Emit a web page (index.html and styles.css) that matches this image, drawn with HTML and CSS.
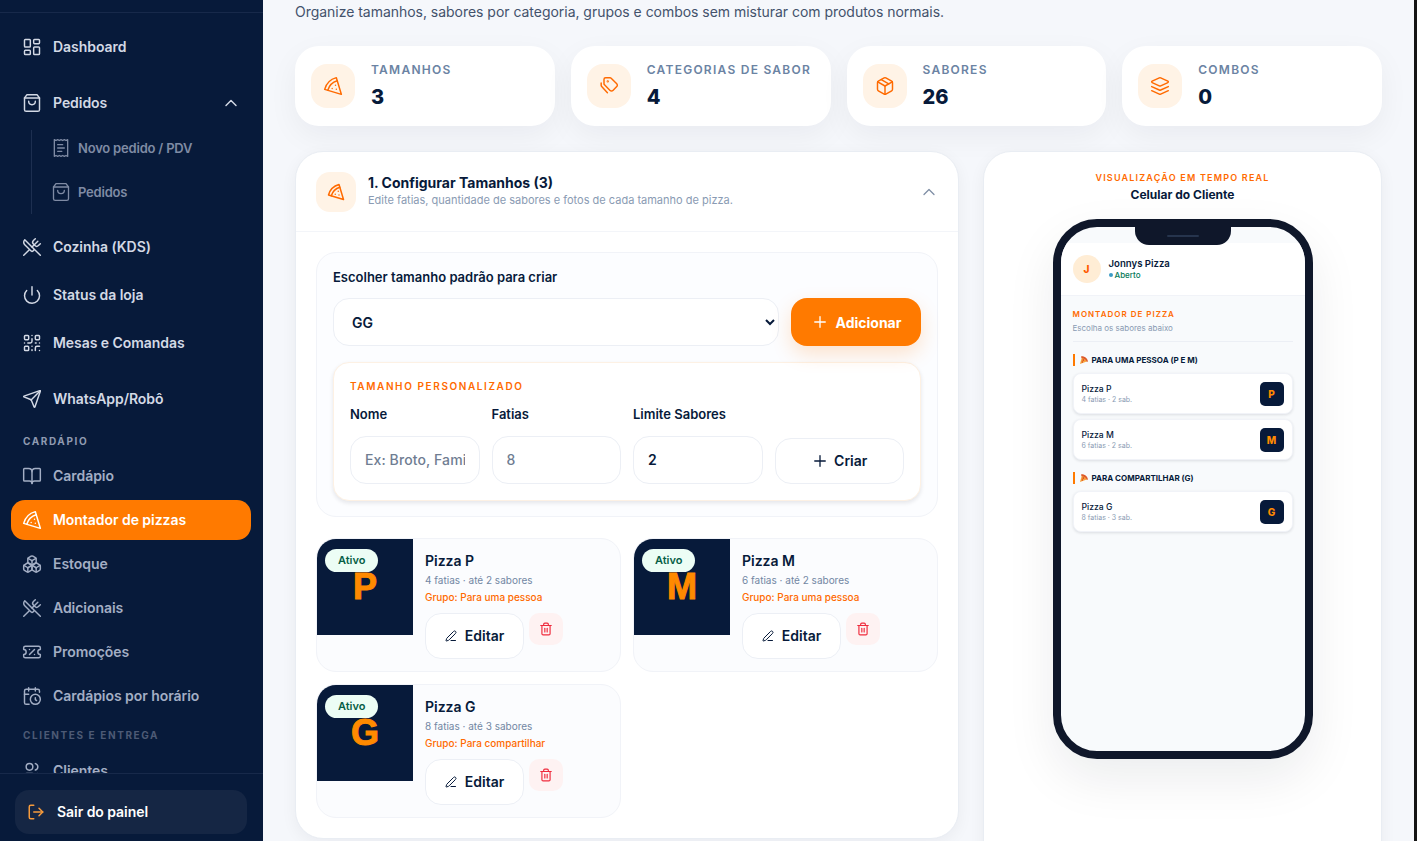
FILE: index.html
```html
<!DOCTYPE html>
<html lang="pt-BR">
<head>
    <meta charset="UTF-8">
    <title>Montador de pizzas</title>
    <link rel="stylesheet" href="styles.css">
</head>
<body>
    <svg class="sprite" xmlns="http://www.w3.org/2000/svg">
        <symbol id="i-dash" viewBox="0 0 24 24"><rect width="7" height="9" x="3" y="3" rx="1"/><rect width="7" height="5" x="14" y="3" rx="1"/><rect width="7" height="9" x="14" y="12" rx="1"/><rect width="7" height="5" x="3" y="16" rx="1"/></symbol>
        <symbol id="i-bag" viewBox="0 0 24 24"><path d="M6 2 3 6v14a2 2 0 0 0 2 2h14a2 2 0 0 0 2-2V6l-3-4Z"/><path d="M3 6h18"/><path d="M16 10a4 4 0 0 1-8 0"/></symbol>
        <symbol id="i-receipt" viewBox="0 0 24 24"><path d="M4 2v20l2-1 2 1 2-1 2 1 2-1 2 1 2-1 2 1V2l-2 1-2-1-2 1-2-1-2 1-2-1-2 1Z"/><path d="M14 8H8"/><path d="M16 12H8"/><path d="M13 16H8"/></symbol>
        <symbol id="i-utensils" viewBox="0 0 24 24"><path d="m16 2-2.3 2.3a3 3 0 0 0 0 4.2l1.8 1.8a3 3 0 0 0 4.2 0L22 8"/><path d="M15 15 3.3 3.3a4.2 4.2 0 0 0 0 6l7.3 7.3c.7.7 2 .7 2.8 0L15 15Zm0 0 7 7"/><path d="m2.1 21.8 6.4-6.3"/><path d="m19 5-7 7"/></symbol>
        <symbol id="i-power" viewBox="0 0 24 24"><path d="M12 2v10"/><path d="M18.4 6.6a9 9 0 1 1-12.77.04"/></symbol>
        <symbol id="i-qr" viewBox="0 0 24 24"><rect width="5" height="5" x="3" y="3" rx="1"/><rect width="5" height="5" x="16" y="3" rx="1"/><rect width="5" height="5" x="3" y="16" rx="1"/><path d="M21 16h-3a2 2 0 0 0-2 2v3"/><path d="M21 21v.01"/><path d="M12 7v3a2 2 0 0 1-2 2H7"/><path d="M3 12h.01"/><path d="M12 3h.01"/><path d="M12 16v.01"/><path d="M16 12h1"/><path d="M21 12v.01"/><path d="M12 21v-1"/></symbol>
        <symbol id="i-send" viewBox="0 0 24 24"><path d="M14.536 21.686a.5.5 0 0 0 .937-.024l6.5-19a.496.496 0 0 0-.635-.635l-19 6.5a.5.5 0 0 0-.024.937l7.93 3.18a2 2 0 0 1 1.112 1.11z"/><path d="m21.854 2.147-10.94 10.939"/></symbol>
        <symbol id="i-book" viewBox="0 0 24 24"><path d="M12 7v14"/><path d="M3 18a1 1 0 0 1-1-1V4a1 1 0 0 1 1-1h5a4 4 0 0 1 4 4 4 4 0 0 1 4-4h5a1 1 0 0 1 1 1v13a1 1 0 0 1-1 1h-6a3 3 0 0 0-3 3 3 3 0 0 0-3-3z"/></symbol>
        <symbol id="i-pizza" viewBox="0 0 24 24"><path d="M15 11h.01"/><path d="M11 15h.01"/><path d="M16 16h.01"/><path d="m2 16 20 6-6-20A20 20 0 0 0 2 16"/><path d="M5.71 17.11a17.04 17.04 0 0 1 11.4-11.4"/></symbol>
        <symbol id="i-boxes" viewBox="0 0 24 24"><path d="M2.97 12.92A2 2 0 0 0 2 14.63v3.24a2 2 0 0 0 .97 1.71l3 1.8a2 2 0 0 0 2.06 0L12 19v-5.5l-5-3-4.03 2.42Z"/><path d="m7 16.5-4.74-2.85"/><path d="m7 16.5 5-3"/><path d="M7 16.5v5.17"/><path d="M12 13.5V19l3.97 2.38a2 2 0 0 0 2.06 0l3-1.8a2 2 0 0 0 .97-1.71v-3.24a2 2 0 0 0-.97-1.71L17 10.5l-5 3Z"/><path d="m17 16.5-5-3"/><path d="m17 16.5 4.74-2.85"/><path d="M17 16.5v5.17"/><path d="M7.97 4.42A2 2 0 0 0 7 6.13v4.37l5 3 5-3V6.13a2 2 0 0 0-.97-1.71l-3-1.8a2 2 0 0 0-2.06 0l-3 1.8Z"/><path d="M12 8 7.26 5.15"/><path d="m12 8 4.74-2.85"/><path d="M12 13.5V8"/></symbol>
        <symbol id="i-ticket" viewBox="0 0 24 24"><path d="M2 9a3 3 0 1 1 0 6v2a2 2 0 0 0 2 2h16a2 2 0 0 0 2-2v-2a3 3 0 1 1 0-6V7a2 2 0 0 0-2-2H4a2 2 0 0 0-2 2Z"/><path d="M9 9h.01"/><path d="m15 9-6 6"/><path d="M15 15h.01"/></symbol>
        <symbol id="i-calendar" viewBox="0 0 24 24"><path d="M21 7.5V6a2 2 0 0 0-2-2H5a2 2 0 0 0-2 2v14a2 2 0 0 0 2 2h3.5"/><path d="M16 2v4"/><path d="M8 2v4"/><path d="M3 10h5"/><path d="M17.5 17.5 16 16.3V14"/><circle cx="16" cy="16" r="6"/></symbol>
        <symbol id="i-users" viewBox="0 0 24 24"><path d="M16 21v-2a4 4 0 0 0-4-4H6a4 4 0 0 0-4 4v2"/><circle cx="9" cy="7" r="4"/><path d="M22 21v-2a4 4 0 0 0-3-3.87"/><path d="M16 3.13a4 4 0 0 1 0 7.75"/></symbol>
        <symbol id="i-logout" viewBox="0 0 24 24"><path d="M9 21H5a2 2 0 0 1-2-2V5a2 2 0 0 1 2-2h4"/><path d="m16 17 5-5-5-5"/><path d="M21 12H9"/></symbol>
        <symbol id="i-tags" viewBox="0 0 24 24"><path d="M8 2h5.2a2 2 0 0 1 1.4.6l6.7 6.7a2.4 2.4 0 0 1 0 3.4l-4.6 4.6a2.4 2.4 0 0 1-3.4 0l-6.7-6.7A2 2 0 0 1 6 9.2V4a2 2 0 0 1 2-2Z"/><path d="M2.6 8.5v2.7a2 2 0 0 0 .6 1.4l6.9 7.4"/><circle cx="10.5" cy="6.5" r=".5"/></symbol>
        <symbol id="i-package" viewBox="0 0 24 24"><path d="M11 21.73a2 2 0 0 0 2 0l7-4A2 2 0 0 0 21 16V8a2 2 0 0 0-1-1.73l-7-4a2 2 0 0 0-2 0l-7 4A2 2 0 0 0 3 8v8a2 2 0 0 0 1 1.73z"/><path d="M12 22V12"/><path d="M3.29 7 12 12l8.71-5"/><path d="m7.5 4.27 9 5.15"/></symbol>
        <symbol id="i-layers" viewBox="0 0 24 24"><path d="M12.83 2.18a2 2 0 0 0-1.66 0L2.6 6.08a1 1 0 0 0 0 1.83l8.58 3.91a2 2 0 0 0 1.66 0l8.58-3.9a1 1 0 0 0 0-1.83Z"/><path d="m22 17.65-9.17 4.16a2 2 0 0 1-1.66 0L2 17.65"/><path d="m22 12.65-9.17 4.16a2 2 0 0 1-1.66 0L2 12.65"/></symbol>
        <symbol id="i-plus" viewBox="0 0 24 24"><path d="M5 12h14"/><path d="M12 5v14"/></symbol>
        <symbol id="i-up" viewBox="0 0 24 24"><path d="m18 15-6-6-6 6"/></symbol>
        <symbol id="i-pen" viewBox="0 0 24 24"><path d="M21.174 6.812a1 1 0 0 0-3.986-3.987L3.842 16.174a2 2 0 0 0-.5.83l-1.321 4.352a.5.5 0 0 0 .623.622l4.353-1.32a2 2 0 0 0 .83-.497z"/><path d="M12 21h9"/></symbol>
        <symbol id="i-trash" viewBox="0 0 24 24"><path d="M3 6h18"/><path d="M19 6v14c0 1-1 2-2 2H7c-1 0-2-1-2-2V6"/><path d="M8 6V4c0-1 1-2 2-2h4c1 0 2 1 2 2v2"/><path d="M10 11v6"/><path d="M14 11v6"/></symbol>
        <symbol id="i-slice" viewBox="0 0 12 12"><path fill="#f6a53c" stroke="none" d="M0 12 3 1 11 8z"/><path fill="#dd5a2a" stroke="none" d="M2 0q8 .5 10 8l-1.500 1Q8 4 2 3z"/><circle cx="5" cy="6" r="1.300" fill="#d9381e" stroke="none"/><circle cx="3.500" cy="9" r="1" fill="#d9381e" stroke="none"/></symbol>
    </svg>

    <aside class="sidebar">
        <div class="side-top"></div>
        <nav class="side-nav">
            <a class="nav-item main gap"><svg class="ico"><use href="#i-dash"/></svg>Dashboard</a>
            <a class="nav-item main"><svg class="ico"><use href="#i-bag"/></svg>Pedidos<svg class="ico chev"><use href="#i-up"/></svg></a>
            <div class="sub-list">
                <a class="sub-item"><svg class="ico"><use href="#i-receipt"/></svg>Novo pedido / PDV</a>
                <a class="sub-item"><svg class="ico"><use href="#i-bag"/></svg>Pedidos</a>
            </div>
            <a class="nav-item main"><svg class="ico"><use href="#i-utensils"/></svg>Cozinha (KDS)</a>
            <a class="nav-item main"><svg class="ico"><use href="#i-power"/></svg>Status da loja</a>
            <a class="nav-item main gap"><svg class="ico"><use href="#i-qr"/></svg>Mesas e Comandas</a>
            <a class="nav-item main"><svg class="ico"><use href="#i-send"/></svg>WhatsApp/Robô</a>
            <div class="nav-title">CARDÁPIO</div>
            <a class="nav-item"><svg class="ico"><use href="#i-book"/></svg>Cardápio</a>
            <a class="nav-item active"><svg class="ico"><use href="#i-pizza"/></svg>Montador de pizzas</a>
            <a class="nav-item"><svg class="ico"><use href="#i-boxes"/></svg>Estoque</a>
            <a class="nav-item"><svg class="ico"><use href="#i-utensils"/></svg>Adicionais</a>
            <a class="nav-item"><svg class="ico"><use href="#i-ticket"/></svg>Promoções</a>
            <a class="nav-item"><svg class="ico"><use href="#i-calendar"/></svg>Cardápios por horário</a>
            <div class="nav-title dim">CLIENTES E ENTREGA</div>
            <a class="nav-item"><svg class="ico"><use href="#i-users"/></svg>Clientes</a>
        </nav>
        <div class="side-foot">
            <a class="logout"><svg class="ico"><use href="#i-logout"/></svg>Sair do painel</a>
        </div>
    </aside>

    <main class="content">
        <p class="lead">Organize tamanhos, sabores por categoria, grupos e combos sem misturar com produtos normais.</p>

        <section class="stats">
            <div class="stat"><span class="stat-ico"><svg class="ico"><use href="#i-pizza"/></svg></span><div><div class="stat-label">TAMANHOS</div><div class="stat-num">3</div></div></div>
            <div class="stat"><span class="stat-ico"><svg class="ico"><use href="#i-tags"/></svg></span><div><div class="stat-label">CATEGORIAS DE SABOR</div><div class="stat-num">4</div></div></div>
            <div class="stat"><span class="stat-ico"><svg class="ico"><use href="#i-package"/></svg></span><div><div class="stat-label">SABORES</div><div class="stat-num">26</div></div></div>
            <div class="stat"><span class="stat-ico"><svg class="ico"><use href="#i-layers"/></svg></span><div><div class="stat-label">COMBOS</div><div class="stat-num">0</div></div></div>
        </section>

        <div class="columns">
            <section class="panel">
                <header class="panel-head">
                    <span class="head-ico"><svg class="ico"><use href="#i-pizza"/></svg></span>
                    <div class="head-text">
                        <h2>1. Configurar Tamanhos (3)</h2>
                        <p>Edite fatias, quantidade de sabores e fotos de cada tamanho de pizza.</p>
                    </div>
                    <svg class="ico head-chev"><use href="#i-up"/></svg>
                </header>
                <div class="panel-body">
                    <div class="picker">
                        <label class="picker-label" for="padrao">Escolher tamanho padrão para criar</label>
                        <div class="picker-row">
                            <select id="padrao" class="select"><option>GG</option></select>
                            <button class="btn-add"><svg class="ico"><use href="#i-plus"/></svg>Adicionar</button>
                        </div>
                        <div class="custom">
                            <div class="custom-title">TAMANHO PERSONALIZADO</div>
                            <div class="custom-grid">
                                <label for="c-nome">Nome</label>
                                <label for="c-fatias">Fatias</label>
                                <label for="c-limite">Limite Sabores</label>
                                <span></span>
                                <input id="c-nome" class="field" type="text" placeholder="Ex: Broto, Familia">
                                <input id="c-fatias" class="field" type="text" placeholder="8">
                                <input id="c-limite" class="field" type="text" value="2">
                                <button class="btn-create"><svg class="ico"><use href="#i-plus"/></svg>Criar</button>
                            </div>
                        </div>
                    </div>

                    <div class="sizes">
                        <article class="size">
                            <div class="thumb"><span class="badge">Ativo</span><span class="letter">P</span></div>
                            <div class="size-info">
                                <h3>Pizza P</h3>
                                <p class="size-sub">4 fatias · até 2 sabores</p>
                                <p class="size-group">Grupo: Para uma pessoa</p>
                                <div class="size-actions">
                                    <button class="btn-edit"><svg class="ico"><use href="#i-pen"/></svg>Editar</button>
                                    <button class="btn-trash"><svg class="ico"><use href="#i-trash"/></svg></button>
                                </div>
                            </div>
                        </article>
                        <article class="size">
                            <div class="thumb"><span class="badge">Ativo</span><span class="letter">M</span></div>
                            <div class="size-info">
                                <h3>Pizza M</h3>
                                <p class="size-sub">6 fatias · até 2 sabores</p>
                                <p class="size-group">Grupo: Para uma pessoa</p>
                                <div class="size-actions">
                                    <button class="btn-edit"><svg class="ico"><use href="#i-pen"/></svg>Editar</button>
                                    <button class="btn-trash"><svg class="ico"><use href="#i-trash"/></svg></button>
                                </div>
                            </div>
                        </article>
                        <article class="size">
                            <div class="thumb"><span class="badge">Ativo</span><span class="letter">G</span></div>
                            <div class="size-info">
                                <h3>Pizza G</h3>
                                <p class="size-sub">8 fatias · até 3 sabores</p>
                                <p class="size-group">Grupo: Para compartilhar</p>
                                <div class="size-actions">
                                    <button class="btn-edit"><svg class="ico"><use href="#i-pen"/></svg>Editar</button>
                                    <button class="btn-trash"><svg class="ico"><use href="#i-trash"/></svg></button>
                                </div>
                            </div>
                        </article>
                    </div>
                </div>
            </section>

            <section class="preview">
                <div class="preview-kicker">VISUALIZAÇÃO EM TEMPO REAL</div>
                <div class="preview-title">Celular do Cliente</div>
                <div class="phone">
                    <div class="notch"><i></i></div>
                    <div class="screen">
                        <div class="shop">
                            <span class="shop-logo">J</span>
                            <div>
                                <div class="shop-name">Jonnys Pizza</div>
                                <div class="shop-status"><i></i>Aberto</div>
                            </div>
                        </div>
                        <div class="screen-body">
                            <div class="builder-title">MONTADOR DE PIZZA</div>
                            <div class="builder-sub">Escolha os sabores abaixo</div>
                            <div class="group-title"><svg class="slice"><use href="#i-slice"/></svg>PARA UMA PESSOA (P E M)</div>
                            <div class="opt"><div><div class="opt-name">Pizza P</div><div class="opt-sub">4 fatias · 2 sab.</div></div><span class="opt-tag">P</span></div>
                            <div class="opt"><div><div class="opt-name">Pizza M</div><div class="opt-sub">6 fatias · 2 sab.</div></div><span class="opt-tag">M</span></div>
                            <div class="group-title"><svg class="slice"><use href="#i-slice"/></svg>PARA COMPARTILHAR (G)</div>
                            <div class="opt"><div><div class="opt-name">Pizza G</div><div class="opt-sub">8 fatias · 3 sab.</div></div><span class="opt-tag">G</span></div>
                        </div>
                    </div>
                </div>
            </section>
        </div>
    </main>
</body>
</html>
```

FILE: styles.css
```css
* {
    box-sizing: border-box;
}

html,
body {
    height: 100%;
}

body {
    margin: 0;
    display: flex;
    overflow: hidden;
    background-color: #f5f7fb;
    color: #071a3a;
    font-family: Inter, "Noto Sans", sans-serif;
}

h2,
h3,
p {
    margin: 0;
}

button,
input,
select {
    font-family: inherit;
}

.sprite {
    display: none;
}

.ico {
    flex: none;
    width: 18px;
    height: 18px;
    fill: none;
    stroke: currentColor;
    stroke-width: 2;
    stroke-linecap: round;
    stroke-linejoin: round;
}

/* barra lateral */
.sidebar {
    flex: none;
    width: 263px;
    height: 841px;
    display: flex;
    flex-direction: column;
    background-color: #071a3a;
}

.side-top {
    flex: none;
    height: 13px;
    border-bottom: 1px solid #17294a;
}

.side-nav {
    flex: 1;
    overflow: hidden;
    padding: 10px 12px 0 11px;
}

.nav-item {
    display: flex;
    align-items: center;
    gap: 11px;
    height: 40px;
    margin-bottom: 4px;
    padding: 0 11px 1px;
    border-radius: 14px;
    color: #a3aec4;
    font-size: 14px;
    font-weight: 600;
    letter-spacing: -0.05px;
}

.nav-item .ico {
    width: 20px;
    height: 20px;
    stroke-width: 1.75;
}

.nav-item.main {
    height: 48px;
    margin-bottom: 0;
    color: #d3d9e5;
}

.nav-item.gap {
    margin-bottom: 8px;
}

.nav-item.active {
    background-color: #ff7a00;
    color: #fff;
}

.nav-item .chev {
    margin-left: auto;
    margin-right: -1px;
}

.sub-list {
    display: flex;
    flex-direction: column;
    gap: 8px;
    height: 84px;
    margin: 3px 0 9px 20px;
    padding-bottom: 4px;
    border-left: 1px solid #1d2f50;
}

.sub-item {
    display: flex;
    align-items: center;
    gap: 7px;
    height: 36px;
    padding-left: 19px;
    color: #7f8ba4;
    font-size: 13px;
    font-weight: 600;
    letter-spacing: -0.2px;
}

.sub-item .ico {
    width: 20px;
    height: 20px;
    stroke-width: 1.6;
}

.nav-title {
    height: 34px;
    margin: -1px 0 0 12px;
    padding-top: 6px;
    color: #8f9ab1;
    font-size: 10px;
    font-weight: 700;
    letter-spacing: 1.6px;
    line-height: 26px;
}

.nav-title.dim {
    height: 31px;
    margin-top: 0;
    padding-top: 0;
    color: #4d5a75;
    line-height: 30px;
}

.side-foot {
    flex: none;
    height: 68px;
    padding: 16px 16px 7px 15px;
    border-top: 1px solid #17294a;
}

.logout {
    display: flex;
    align-items: center;
    gap: 12px;
    height: 44px;
    padding: 0 12px 1px;
    border-radius: 14px;
    background-color: #152644;
    color: #fff;
    font-size: 14px;
    font-weight: 600;
    letter-spacing: -0.05px;
}

.logout .ico {
    color: #f59a3c;
}

/* conteudo */
.content {
    width: 1154px;
    height: 841px;
    overflow: hidden;
    padding: 3px 32px 0 32px;
    border-right: 3px solid #141414;
}

.lead {
    height: 18px;
    margin-bottom: 25px;
    color: #43526b;
    font-size: 14px;
    letter-spacing: -0.03px;
    line-height: 18px;
}

.stats {
    display: grid;
    grid-template-columns: repeat(4, 1fr);
    gap: 16px;
    margin-bottom: 25px;
}

.stat {
    display: flex;
    align-items: center;
    gap: 16px;
    height: 80px;
    padding: 0 16px;
    border-radius: 24px;
    background-color: #fff;
    box-shadow: 0 10px 30px rgba(15, 23, 42, 0.05);
}

.stat-ico {
    flex: none;
    display: flex;
    align-items: center;
    justify-content: center;
    width: 44px;
    height: 44px;
    border-radius: 16px;
    background-color: #fff3e6;
    color: #ff6a00;
}

.stat-ico .ico {
    width: 20px;
    height: 20px;
    stroke-width: 1.75;
}

.stat-label {
    color: #6b83a3;
    font-size: 12px;
    font-weight: 600;
    letter-spacing: 1.25px;
    line-height: 16px;
    white-space: nowrap;
}

.stat-num {
    margin-top: 5px;
    color: #071a3a;
    font-size: 20px;
    font-weight: 800;
    line-height: 28px;
}

.columns {
    display: grid;
    grid-template-columns: 664px 399px;
    gap: 24px;
    align-items: start;
}

.panel {
    border: 1px solid #e9edf3;
    border-radius: 28px;
    background-color: #fff;
    box-shadow: 0 4px 16px rgba(15, 23, 42, 0.05);
}

.panel-head {
    display: flex;
    align-items: center;
    gap: 12px;
    height: 80px;
    padding: 0 20px;
    border-bottom: 1px solid #f3f5f9;
}

.head-ico {
    flex: none;
    display: flex;
    align-items: center;
    justify-content: center;
    width: 40px;
    height: 40px;
    border-radius: 14px;
    background-color: #fff3e6;
    color: #ff6a00;
}

.head-text {
    flex: 1;
}

.head-text h2 {
    margin-bottom: 2px;
    color: #071a3a;
    font-size: 14px;
    font-weight: 700;
    line-height: 16px;
}

.head-text p {
    color: #8a9bb3;
    font-size: 11px;
    line-height: 15px;
}

.head-chev {
    width: 20px;
    height: 20px;
    margin-right: -1px;
    stroke-width: 1.5;
    color: #7f8ea5;
}

.panel-body {
    padding: 20px;
}

.picker {
    padding: 15px 16px;
    border: 1px solid #f1f3f8;
    border-radius: 20px;
    background-color: #fcfdff;
}

.picker-label {
    display: block;
    margin-bottom: 12px;
    color: #071a3a;
    font-size: 13px;
    font-weight: 600;
    line-height: 18px;
}

.picker-row {
    display: flex;
    gap: 12px;
    margin-bottom: 16px;
}

.select {
    flex: 1;
    height: 48px;
    padding: 0 4px 0 14px;
    border: 1px solid #eceff5;
    border-radius: 16px;
    background-color: #fff;
    color: #071a3a;
    font-size: 14px;
    font-weight: 600;
}

.btn-add {
    flex: none;
    display: flex;
    align-items: center;
    justify-content: center;
    gap: 7px;
    width: 130px;
    height: 48px;
    border: none;
    border-radius: 16px;
    background-color: #ff7a00;
    color: #fff;
    font-size: 14px;
    font-weight: 700;
    box-shadow: 0 8px 20px rgba(255, 122, 0, 0.2);
}

.btn-add .ico {
    stroke-width: 1.75;
}

.custom {
    height: 139px;
    padding: 16px;
    border: 1px solid #fdf1e4;
    border-radius: 16px;
    background-color: #fff;
    box-shadow: 0 2px 4px rgba(15, 23, 42, 0.1);
}

.custom-title {
    margin-bottom: 12px;
    color: #ff6a00;
    font-size: 10px;
    font-weight: 600;
    letter-spacing: 1.6px;
    line-height: 14px;
}

.custom-grid {
    display: grid;
    grid-template-columns: repeat(4, 1fr);
    grid-template-rows: 23px 48px;
    column-gap: 12px;
    row-gap: 8px;
    align-items: start;
}

.custom-grid label {
    color: #071a3a;
    font-size: 13px;
    font-weight: 600;
    line-height: 18px;
}

.field {
    width: 100%;
    height: 48px;
    padding: 0 14px 2px;
    border: 1px solid #eceff5;
    border-radius: 16px;
    background-color: #fff;
    color: #071a3a;
    font-size: 14px;
    font-weight: 600;
}

.field::placeholder {
    color: #6f7d92;
    font-weight: 500;
    letter-spacing: 0.1px;
}

.btn-create {
    display: flex;
    align-items: center;
    justify-content: center;
    gap: 5px;
    height: 46px;
    margin-top: 2px;
    padding-bottom: 2px;
    border: 1px solid #eceff5;
    border-radius: 16px;
    background-color: #fff;
    color: #071a3a;
    font-size: 14px;
    font-weight: 600;
}

.btn-create .ico {
    stroke-width: 1.75;
}

.sizes {
    display: grid;
    grid-template-columns: repeat(2, 1fr);
    gap: 12px;
    margin-top: 21px;
}

.size {
    display: flex;
    height: 134px;
    border: 1px solid #f1f3f8;
    border-radius: 20px;
    background-color: #fbfcfe;
    overflow: hidden;
}

.thumb {
    position: relative;
    flex: none;
    display: flex;
    align-items: center;
    justify-content: center;
    width: 96px;
    height: 96px;
    background-color: #071a3a;
}

.badge {
    position: absolute;
    top: 10px;
    left: 8px;
    padding: 0 13px;
    border-radius: 12px;
    background-color: #ecfdf5;
    color: #065f46;
    font-size: 11px;
    font-weight: 600;
    line-height: 23px;
}

.letter {
    margin-top: -1px;
    color: #ff8a00;
    font-family: "Liberation Sans", Arial, sans-serif;
    font-size: 36px;
    font-weight: 700;
    line-height: 1;
    -webkit-text-stroke: 1px #ff8a00;
}

.size-info {
    flex: 1;
    padding: 12px;
}

.size-info h3 {
    color: #071a3a;
    font-size: 14px;
    font-weight: 600;
    line-height: 20px;
}

.size-sub {
    margin-top: 1px;
    color: #7287a3;
    font-size: 10px;
    line-height: 16px;
}

.size-group {
    margin-top: 1px;
    color: #ff6a00;
    font-size: 10px;
    font-weight: 500;
    line-height: 16px;
}

.size-actions {
    display: flex;
    align-items: flex-start;
    gap: 5px;
    margin-top: 8px;
}

.btn-edit {
    display: flex;
    align-items: center;
    justify-content: center;
    gap: 8px;
    width: 99px;
    height: 46px;
    padding-bottom: 2px;
    border: 1px solid #eceff5;
    border-radius: 16px;
    background-color: #fff;
    color: #071a3a;
    font-size: 14px;
    font-weight: 600;
}

.btn-edit .ico {
    width: 12px;
    height: 12px;
}

.btn-trash {
    display: flex;
    align-items: center;
    justify-content: center;
    width: 34px;
    height: 32px;
    padding: 0;
    border: none;
    border-radius: 10px;
    background-color: #fef2f2;
    color: #ef2b3d;
}

.btn-trash .ico {
    width: 14px;
    height: 14px;
}

/* celular */
.preview {
    height: 760px;
    padding: 20px 0 0;
    border: 1px solid #e9edf3;
    border-radius: 28px;
    background-color: #fff;
    box-shadow: 0 4px 16px rgba(15, 23, 42, 0.05);
    text-align: center;
}

.preview-kicker {
    color: #ff6a00;
    font-size: 9px;
    font-weight: 600;
    letter-spacing: 1.2px;
    line-height: 12px;
}

.preview-title {
    margin-top: 2px;
    color: #071a3a;
    font-size: 12px;
    font-weight: 700;
    line-height: 18px;
}

.phone {
    position: relative;
    width: 260px;
    height: 540px;
    margin: 15px auto 0;
    border: 8px solid #0f172a;
    border-radius: 44px;
    background-color: #f8fafc;
    overflow: hidden;
    box-shadow: 0 20px 50px rgba(15, 23, 42, 0.08);
    text-align: left;
}

.notch {
    position: absolute;
    top: 0;
    left: 74px;
    display: flex;
    justify-content: center;
    width: 96px;
    height: 18px;
    border-radius: 0 0 14px 14px;
    background-color: #0f172a;
}

.notch i {
    width: 32px;
    height: 2px;
    margin-top: 8px;
    border-radius: 1px;
    background-color: #26344d;
}

.screen {
    height: 100%;
    padding-top: 16px;
}

.shop {
    display: flex;
    align-items: center;
    gap: 8px;
    height: 53px;
    padding: 0 12px;
    border-bottom: 1px solid #f1f3f8;
    background-color: #fff;
}

.shop-logo {
    display: flex;
    align-items: center;
    justify-content: center;
    width: 28px;
    height: 28px;
    border-radius: 50%;
    background-color: #ffedd5;
    color: #ff5a00;
    font-size: 10px;
    font-weight: 800;
}

.shop-name {
    color: #071a3a;
    font-size: 9.6px;
    font-weight: 600;
    line-height: 12px;
}

.shop-status {
    display: flex;
    align-items: center;
    gap: 2px;
    color: #047857;
    font-size: 8px;
    font-weight: 500;
    line-height: 11px;
}

.shop-status i {
    width: 4px;
    height: 4px;
    border-radius: 50%;
    background-color: #3b9bc4;
}

.screen-body {
    padding: 13px 12px 0;
}

.builder-title {
    color: #ff6a00;
    font-size: 8px;
    font-weight: 600;
    letter-spacing: 1px;
    line-height: 11px;
}

.builder-sub {
    height: 19px;
    margin-top: 3px;
    border-bottom: 1px solid #eceff5;
    color: #8a9bb3;
    font-size: 8px;
    line-height: 11px;
}

.group-title {
    display: flex;
    align-items: center;
    gap: 4px;
    height: 12px;
    margin: 12px 0 7px;
    padding-left: 5px;
    border-left: 2px solid #ff7a00;
    color: #071a3a;
    font-size: 8px;
    font-weight: 700;
    line-height: 12px;
}

.slice {
    flex: none;
    width: 8px;
    height: 8px;
}

.opt {
    display: flex;
    align-items: center;
    justify-content: space-between;
    height: 41px;
    margin-bottom: 5px;
    padding: 0 8px;
    border: 1px solid #f1f3f8;
    border-radius: 8px;
    background-color: #fff;
    box-shadow: 0 1px 3px rgba(15, 23, 42, 0.12);
}

.opt-name {
    color: #071a3a;
    font-size: 8.6px;
    font-weight: 500;
    line-height: 12px;
}

.opt-sub {
    color: #8a9bb3;
    font-size: 7px;
    line-height: 10px;
}

.opt-tag {
    display: flex;
    align-items: center;
    justify-content: center;
    width: 24px;
    height: 24px;
    border-radius: 5px;
    background-color: #071a3a;
    color: #ff8a00;
    font-size: 10px;
    font-weight: 800;
}
```
